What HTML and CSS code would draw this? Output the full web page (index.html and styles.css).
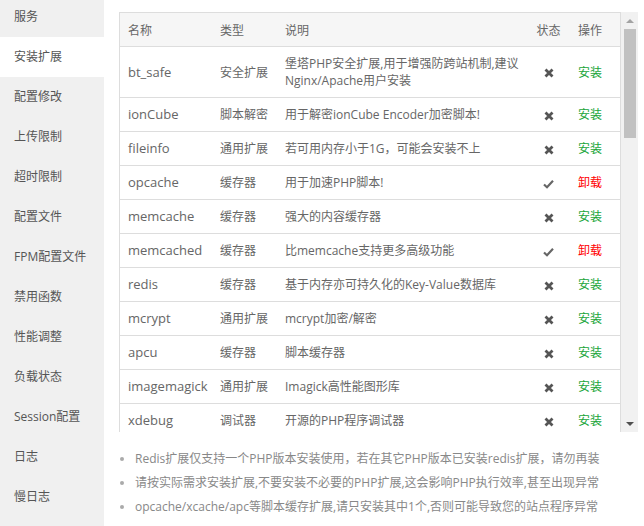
FILE: index.html
```html
<!DOCTYPE html>
<html>
<head>
    <meta charset="utf-8">
    <title>PHP管理 - 安装扩展</title>
    <link rel="stylesheet" href="styles.css">
</head>
<body>
<div class="page">

    <!-- left menu -->
    <ul class="menu">
        <li>服务</li>
        <li class="on">安装扩展</li>
        <li>配置修改</li>
        <li>上传限制</li>
        <li>超时限制</li>
        <li>配置文件</li>
        <li>FPM配置文件</li>
        <li>禁用函数</li>
        <li>性能调整</li>
        <li>负载状态</li>
        <li>Session配置</li>
        <li>日志</li>
        <li>慢日志</li>
    </ul>

    <div class="main">
        <div class="tablerow">
            <div class="tablebox">
                <table class="exts">
                    <colgroup>
                        <col class="c-name"><col class="c-type"><col class="c-desc"><col class="c-stat"><col class="c-op">
                    </colgroup>
                    <thead>
                        <tr><th>名称</th><th>类型</th><th>说明</th><th class="st">状态</th><th>操作</th></tr>
                    </thead>
                    <tbody>
                        <tr><td>bt_safe</td><td>安全扩展</td><td>堡塔PHP安全扩展,用于增强防跨站机制,建议Nginx/Apache用户安装</td><td class="st"><svg class="no" viewBox="0 0 10 10"><path d="M1.5 1.5L8.5 8.5M8.5 1.5L1.5 8.5"/></svg></td><td><a class="inst">安装</a></td></tr>
                        <tr><td>ionCube</td><td>脚本解密</td><td>用于解密ionCube Encoder加密脚本!</td><td class="st"><svg class="no" viewBox="0 0 10 10"><path d="M1.5 1.5L8.5 8.5M8.5 1.5L1.5 8.5"/></svg></td><td><a class="inst">安装</a></td></tr>
                        <tr><td>fileinfo</td><td>通用扩展</td><td>若可用内存小于1G，可能会安装不上</td><td class="st"><svg class="no" viewBox="0 0 10 10"><path d="M1.5 1.5L8.5 8.5M8.5 1.5L1.5 8.5"/></svg></td><td><a class="inst">安装</a></td></tr>
                        <tr><td>opcache</td><td>缓存器</td><td>用于加速PHP脚本!</td><td class="st"><svg class="ok" viewBox="0 0 11 10"><path d="M1 5.5L4 8.2L10 1.8"/></svg></td><td><a class="del">卸载</a></td></tr>
                        <tr><td>memcache</td><td>缓存器</td><td>强大的内容缓存器</td><td class="st"><svg class="no" viewBox="0 0 10 10"><path d="M1.5 1.5L8.5 8.5M8.5 1.5L1.5 8.5"/></svg></td><td><a class="inst">安装</a></td></tr>
                        <tr><td>memcached</td><td>缓存器</td><td>比memcache支持更多高级功能</td><td class="st"><svg class="ok" viewBox="0 0 11 10"><path d="M1 5.5L4 8.2L10 1.8"/></svg></td><td><a class="del">卸载</a></td></tr>
                        <tr><td>redis</td><td>缓存器</td><td>基于内存亦可持久化的Key-Value数据库</td><td class="st"><svg class="no" viewBox="0 0 10 10"><path d="M1.5 1.5L8.5 8.5M8.5 1.5L1.5 8.5"/></svg></td><td><a class="inst">安装</a></td></tr>
                        <tr><td>mcrypt</td><td>通用扩展</td><td>mcrypt加密/解密</td><td class="st"><svg class="no" viewBox="0 0 10 10"><path d="M1.5 1.5L8.5 8.5M8.5 1.5L1.5 8.5"/></svg></td><td><a class="inst">安装</a></td></tr>
                        <tr><td>apcu</td><td>缓存器</td><td>脚本缓存器</td><td class="st"><svg class="no" viewBox="0 0 10 10"><path d="M1.5 1.5L8.5 8.5M8.5 1.5L1.5 8.5"/></svg></td><td><a class="inst">安装</a></td></tr>
                        <tr><td>imagemagick</td><td>通用扩展</td><td>Imagick高性能图形库</td><td class="st"><svg class="no" viewBox="0 0 10 10"><path d="M1.5 1.5L8.5 8.5M8.5 1.5L1.5 8.5"/></svg></td><td><a class="inst">安装</a></td></tr>
                        <tr><td>xdebug</td><td>调试器</td><td>开源的PHP程序调试器</td><td class="st"><svg class="no" viewBox="0 0 10 10"><path d="M1.5 1.5L8.5 8.5M8.5 1.5L1.5 8.5"/></svg></td><td><a class="inst">安装</a></td></tr>
                    </tbody>
                </table>
            </div>
            <!-- fake scrollbar -->
            <div class="sbar">
                <div class="sbtn"><span class="up"></span></div>
                <div class="sthumb"></div>
                <div class="strack"></div>
                <div class="sbtn"><span class="down"></span></div>
            </div>
        </div>

        <ul class="notes">
            <li>Redis扩展仅支持一个PHP版本安装使用，若在其它PHP版本已安装redis扩展，请勿再装</li>
            <li>请按实际需求安装扩展,不要安装不必要的PHP扩展,这会影响PHP执行效率,甚至出现异常</li>
            <li>opcache/xcache/apc等脚本缓存扩展,请只安装其中1个,否则可能导致您的站点程序异常</li>
        </ul>
    </div>
</div>
</body>
</html>
```

FILE: styles.css
```css
html, body
{
    margin: 0;
    padding: 0;
    background: #fff;
    font-family: "Open Sans", "Noto Sans CJK SC", sans-serif;
    font-size: 12px;
    color: #666;
}

.page
{
    display: flex;
    height: 526px;
    overflow: hidden;
}

/* ===== left menu ===== */
.menu
{
    width: 104px;
    flex: none;
    margin: 0;
    padding: 0;
    list-style: none;
    background: #f0f0f0;
}
.menu li
{
    height: 40px;
    line-height: 40px;
    padding-left: 14px;
    color: #555;
    font-size: 12px;
}
.menu li:first-child
{
    margin-top: -3px;
}
.menu li.on
{
    background: #fff;
}

/* ===== main ===== */
.main
{
    flex: 1;
    padding: 12px 0 0 15px;
}
.tablerow
{
    display: flex;
}
.tablebox
{
    width: 500px;
    height: 419px;
    overflow: hidden;
    border: 1px solid #ddd;
    border-bottom: 0;
}

.exts
{
    width: 100%;
    table-layout: fixed;
    border-collapse: collapse;
}
.c-name { width: 92px; }
.c-type { width: 65px; }
.c-desc { width: 250px; }
.c-stat { width: 43px; }
.c-op   { width: 50px; }

.exts th
{
    background: #f6f6f6;
    font-weight: normal;
    text-align: left;
    color: #666;
    height: 33px;
    padding: 0 0 0 8px;
    border-bottom: 1px solid #ddd;
}
.exts td
{
    padding: 8px 0 8px 8px;
    line-height: 17px;
    border-bottom: 1px solid #ddd;
    color: #666;
    vertical-align: middle;
}
.exts td:first-child
{
    font-size: 13px;
}
.exts .st
{
    text-align: center;
    padding-left: 0;
}
.exts svg
{
    display: inline-block;
    vertical-align: middle;
    fill: none;
}
.no
{
    width: 10px;
    height: 10px;
    stroke: #555;
    stroke-width: 2.8;
}
.ok
{
    width: 11px;
    height: 10px;
    stroke: #666;
    stroke-width: 2.2;
}
.inst
{
    color: #20a53a;
}
.del
{
    color: #ff0000;
}

/* ===== scrollbar ===== */
.sbar
{
    width: 17px;
    height: 420px;
    flex: none;
    display: flex;
    flex-direction: column;
    background: #f1f1f1;
}
.sbtn
{
    height: 17px;
    display: flex;
    align-items: center;
    justify-content: center;
}
.up
{
    width: 0;
    height: 0;
    border-left: 4px solid transparent;
    border-right: 4px solid transparent;
    border-bottom: 4px solid #a3a3a3;
}
.down
{
    width: 0;
    height: 0;
    border-left: 4px solid transparent;
    border-right: 4px solid transparent;
    border-top: 4px solid #505050;
}
.sthumb
{
    height: 109px;
    margin: 0 2px 0 3px;
    background: #c1c1c1;
}
.strack
{
    flex: 1;
}

/* ===== notes ===== */
.notes
{
    margin: 15px 0 0 0;
    padding: 0 0 0 16px;
    color: #888;
    font-size: 12px;
}
.notes li
{
    line-height: 24px;
}
.notes li::marker
{
    color: #aaa;
}
```
